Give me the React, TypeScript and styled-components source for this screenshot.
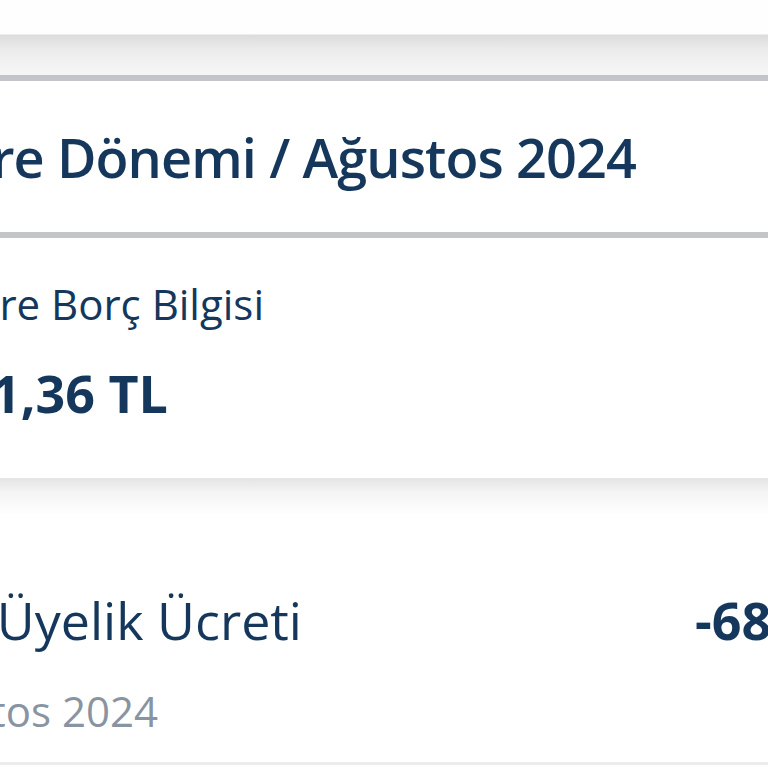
import React from "react";
import styled, { createGlobalStyle } from "styled-components";

const Global = createGlobalStyle`
  html, body { margin: 0; padding: 0; background: #fefefe; }
  body { overflow: hidden; }
  #root { width: 768px; height: 768px; overflow: hidden; }
`;

const Screen = styled.div`
  width: 768px;
  height: 768px;
  overflow: hidden;
  display: flex;
  flex-direction: column;
  background: #fefefe;
  font-family: "Open Sans", "Noto Sans", sans-serif;
  color: #15375c;
`;

const TopGap = styled.div`
  height: 34px;
  flex: none;
  background: #fefefe;
`;

const Band = styled.div`
  height: 40px;
  flex: none;
  border-top: 1px solid #ebebeb;
  background: linear-gradient(#dcdcdc 0%, #ebebeb 35%, #f5f7f5 100%);
  border-bottom: 6px solid #c4c5c9;
`;

const Section = styled.section<{ $h: number; $pad: number; $line?: string }>`
  flex: none;
  height: ${(p) => p.$h}px;
  box-sizing: border-box;
  padding-top: ${(p) => p.$pad}px;
  display: flex;
  flex-direction: column;
  background: #ffffff;
  border-bottom: ${(p) => p.$line ?? "none"};
`;

const Shadowed = styled.section`
  flex: none;
  height: 287px;
  box-sizing: border-box;
  padding-top: 116px;
  display: flex;
  flex-direction: column;
  background: linear-gradient(#e4e4e4 0px, #f4f4f4 14px, #ffffff 38px);
  border-bottom: 3px solid #ececec;
`;

/* anchors the end of a text whose start runs off the left edge */
const EndAnchor = styled.div<{ $end: number; $gap?: number }>`
  flex: none;
  display: flex;
  justify-content: flex-end;
  width: ${(p) => p.$end}px;
  margin-top: ${(p) => p.$gap ?? 0}px;
  white-space: nowrap;
`;

const Row = styled.div<{ $gap?: number }>`
  display: flex;
  align-items: flex-start;
  margin-top: ${(p) => p.$gap ?? 0}px;
`;

const Text = styled.span<{
  $size: number;
  $weight?: number;
  $color?: string;
  $track?: number;
}>`
  flex: none;
  font-size: ${(p) => p.$size}px;
  line-height: ${(p) => p.$size}px;
  font-weight: ${(p) => p.$weight ?? 400};
  letter-spacing: ${(p) => p.$track ?? 0}px;
  color: ${(p) => p.$color ?? "#15375c"};
  white-space: nowrap;
`;

const Amount = styled.span<{ $offset: number }>`
  flex: none;
  margin-left: ${(p) => p.$offset}px;
  font-size: 52px;
  line-height: 52px;
  font-weight: 700;
  color: #15375c;
  white-space: nowrap;
`;

export default function App() {
  return (
    <>
      <Global />
      <Screen>
        <TopGap />
        <Band />
        <Section $h={157} $pad={49} $line="6px solid #c4c5c9">
          <EndAnchor $end={636}>
            <Text $size={54} $weight={600} $track={-0.9}>
              Ekstre Dönemi / Ağustos 2024
            </Text>
          </EndAnchor>
        </Section>
        <Section $h={240} $pad={45}>
          <EndAnchor $end={264}>
            <Text $size={42} $weight={500}>Ekstre Borç Bilgisi</Text>
          </EndAnchor>
          <EndAnchor $end={168} $gap={42}>
            <Text $size={52} $weight={700}>2.481,36 TL</Text>
          </EndAnchor>
        </Section>
        <Shadowed>
          <Row>
            <EndAnchor $end={302}>
              <Text $size={52} $weight={500}>Kart Üyelik Ücreti</Text>
            </EndAnchor>
            <Amount $offset={393}>-68,00 TL</Amount>
          </Row>
          <Row $gap={44}>
            <EndAnchor $end={158}>
              <Text $size={42} $weight={500} $color="#8994a2">
                Ağustos 2024
              </Text>
            </EndAnchor>
          </Row>
        </Shadowed>
      </Screen>
    </>
  );
}
